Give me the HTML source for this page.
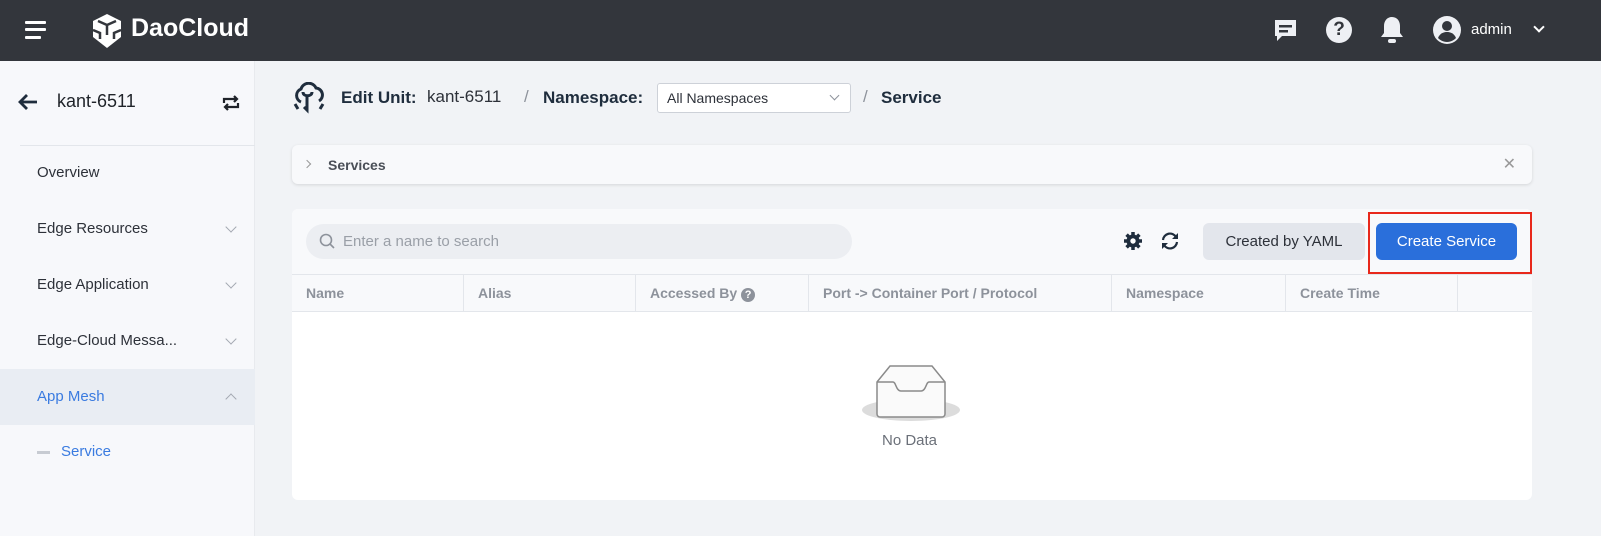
<!DOCTYPE html>
<html><head><meta charset="utf-8"><style>
*{box-sizing:border-box;margin:0;padding:0}
body{width:1601px;height:536px;overflow:hidden;font-family:"Liberation Sans",sans-serif;background:#f1f3f6;position:relative;color:#1f2329}
.hdr{position:absolute;left:0;top:0;width:1601px;height:61px;background:#33363c}
.side{position:absolute;left:0;top:61px;width:255px;height:475px;background:#f7f8fb;border-right:1px solid #e8eaee}
.nav{position:absolute;left:0;width:255px;height:56px;font-size:15px;color:#2d3139;padding-left:37px;line-height:56px}
.chev{position:absolute;right:20px;top:22px;width:8px;height:8px;border-right:1.5px solid #a4a9b2;border-bottom:1.5px solid #a4a9b2;transform:rotate(45deg)}
.card{position:absolute;background:#fff;border-radius:6px}
.th{position:absolute;top:275px;height:36px;line-height:36px;font-size:14px;font-weight:bold;color:#8d929b;padding-left:14px;border-right:1px solid #e3e6eb}
</style></head><body>
<div class="hdr">
 <div style="position:absolute;left:25px;top:21px;width:21px;height:3px;background:#fff;border-radius:1px"></div>
 <div style="position:absolute;left:25px;top:28px;width:21px;height:3px;background:#fff;border-radius:1px"></div>
 <div style="position:absolute;left:25px;top:36px;width:16px;height:3px;background:#fff;border-radius:1px"></div>
 <svg style="position:absolute;left:90px;top:13px" width="34" height="36" viewBox="0 0 34 36"><path d="M17 1 L31 8 L31 24 L17 35 L3 24 L3 8Z" fill="#fff"/><path d="M17 12 L8 8 M17 12 L26 8 M17 12 L17 22 M3 17 L10 20 L10 26 M31 17 L24 20 L24 26" stroke="#33363c" stroke-width="2.5" fill="none"/></svg>
 <div style="position:absolute;left:131px;top:14px;font-size:25px;font-weight:bold;color:#fff">DaoCloud</div>
 <svg style="position:absolute;left:1272px;top:17px" width="27" height="28" viewBox="0 0 27 28"><path d="M3 3h21v16H10l-5 5v-5H3z" fill="#eef0f4"/><rect x="7" y="8" width="13" height="2.5" fill="#33363c"/><rect x="7" y="13" width="9" height="2.5" fill="#33363c"/></svg>
 <div style="position:absolute;left:1326px;top:17px;width:26px;height:26px;border-radius:50%;background:#eef0f4;color:#33363c;font-weight:bold;font-size:19px;text-align:center;line-height:26px">?</div>
 <svg style="position:absolute;left:1379px;top:15px" width="26" height="30" viewBox="0 0 26 30"><path d="M13 2c-5 0-8 4-8 9v7l-3 4h22l-3-4v-7c0-5-3-9-8-9z" fill="#eef0f4"/><rect x="9" y="24" width="8" height="4" rx="2" fill="#eef0f4"/></svg>
 <svg style="position:absolute;left:1432px;top:15px" width="30" height="30" viewBox="0 0 30 30"><circle cx="15" cy="15" r="14" fill="#eef0f4"/><circle cx="15" cy="11" r="5" fill="#33363c"/><path d="M6 23c2-5 6-6 9-6s7 1 9 6c-2 2-5 4-9 4s-7-2-9-4z" fill="#33363c"/></svg>
 <div style="position:absolute;left:1471px;top:21px;font-size:15px;color:#fff">admin</div>
 <div style="position:absolute;left:1535px;top:23px;width:8px;height:8px;border-right:2px solid #fff;border-bottom:2px solid #fff;transform:rotate(45deg)"></div>
</div>
<div class="side">
 <svg style="position:absolute;left:17px;top:32px" width="22" height="18" viewBox="0 0 22 18"><path d="M20 9H3M10 2L3 9l7 7" stroke="#1f2d3d" stroke-width="2.8" fill="none"/></svg>
 <div style="position:absolute;left:57px;top:30px;font-size:18px;color:#1f2329">kant-6511</div>
 <svg style="position:absolute;left:221px;top:33px" width="20" height="18" viewBox="0 0 20 18"><path d="M3 9V5h13M13 2l3 3-3 3M17 9v4H4M7 16l-3-3 3-3" stroke="#1f2329" stroke-width="2.2" fill="none"/></svg>
 <div style="position:absolute;left:20px;top:84px;width:235px;border-top:1px solid #e3e6eb"></div>
 <div class="nav" style="top:84px">Overview</div>
 <div class="nav" style="top:140px">Edge Resources<div class="chev"></div></div>
 <div class="nav" style="top:196px">Edge Application<div class="chev"></div></div>
 <div class="nav" style="top:252px">Edge-Cloud Messa...<div class="chev"></div></div>
 <div class="nav" style="top:308px;background:#e9edf3;color:#3a7be0">App Mesh<div class="chev" style="transform:rotate(225deg);top:26px"></div></div>
 <div style="position:absolute;left:37px;top:390px;width:13px;height:3px;background:#c7cbd2"></div>
 <div style="position:absolute;left:61px;top:382px;font-size:15px;color:#3a7be0">Service</div>
</div>
<svg style="position:absolute;left:292px;top:82px" width="34" height="32" viewBox="0 0 34 32"><path d="M9 20a7 7 0 0 1 0-13a8 8 0 0 1 15-1a7 7 0 0 1 3 13M11 10c0 5 9 5 9 0M15 14v14l-3-3M3 22l3 5M31 22l-3 5" stroke="#1f2d3d" stroke-width="3" fill="none"/></svg>
<div style="position:absolute;left:341px;top:88px;font-size:17px;font-weight:bold;color:#1f2d3d">Edit Unit:</div>
<div style="position:absolute;left:427px;top:87px;font-size:17px;color:#2d3139">kant-6511</div>
<div style="position:absolute;left:524px;top:87px;font-size:17px;color:#8d929b">/</div>
<div style="position:absolute;left:543px;top:88px;font-size:17px;font-weight:bold;color:#1f2d3d">Namespace:</div>
<div style="position:absolute;left:657px;top:83px;width:194px;height:30px;background:#fff;border:1px solid #cdd1d8;border-radius:3px;font-size:14px;line-height:28px;padding-left:9px;color:#2d3139">All Namespaces<div style="position:absolute;right:12px;top:8px;width:7px;height:7px;border-right:1.3px solid #8d929b;border-bottom:1.3px solid #8d929b;transform:rotate(45deg)"></div></div>
<div style="position:absolute;left:863px;top:87px;font-size:17px;color:#8d929b">/</div>
<div style="position:absolute;left:881px;top:88px;font-size:17px;font-weight:bold;color:#1f2d3d">Service</div>
<div class="card" style="left:292px;top:145px;width:1240px;height:39px;background:#f8f9fb;box-shadow:0 1px 3px rgba(0,0,0,.12)">
 <div style="position:absolute;left:12px;top:16px;width:6px;height:6px;border-right:1.3px solid #999;border-top:1.3px solid #999;transform:rotate(45deg)"></div>
 <div style="position:absolute;left:36px;top:12px;font-size:14px;font-weight:bold;color:#4a4f57">Services</div>
 <div style="position:absolute;right:16px;top:9px;font-size:16px;color:#999">✕</div>
</div>
<div class="card" style="left:292px;top:209px;width:1240px;height:291px;background:#fff"></div>
<div style="position:absolute;left:292px;top:209px;width:1240px;height:66px;background:#f8f9fb;border-radius:6px 6px 0 0"></div>
<div style="position:absolute;left:306px;top:224px;width:546px;height:35px;border-radius:18px;background:#eceef2"></div>
<svg style="position:absolute;left:319px;top:233px" width="17" height="17" viewBox="0 0 17 17"><circle cx="7" cy="7" r="5.5" stroke="#8d929b" stroke-width="1.6" fill="none"/><path d="M11 11l4 4" stroke="#8d929b" stroke-width="1.6"/></svg>
<div style="position:absolute;left:343px;top:233px;font-size:15px;color:#9a9fa7">Enter a name to search</div>
<svg style="position:absolute;left:1123px;top:231px" width="20" height="20" viewBox="0 0 20 20"><circle cx="10" cy="10" r="6.5" fill="#1f2d3d"/><g stroke="#1f2d3d" stroke-width="3.5"><path d="M10 1v18M1 10h18M3.6 3.6l12.8 12.8M16.4 3.6L3.6 16.4"/></g><circle cx="10" cy="10" r="2.7" fill="#fff"/></svg>
<svg style="position:absolute;left:1159px;top:231px" width="22" height="20" viewBox="0 0 22 20"><path d="M4 9a7 7 0 0 1 13-3M18 11a7 7 0 0 1-13 3" stroke="#1f2d3d" stroke-width="2.2" fill="none"/><path d="M19 2v6h-6zM3 18v-6h6z" fill="#1f2d3d"/></svg>
<div style="position:absolute;left:1203px;top:223px;width:162px;height:37px;background:#e3e6ec;border-radius:6px;font-size:15px;color:#2d3139;text-align:center;line-height:37px">Created by YAML</div>
<div style="position:absolute;left:1368px;top:212px;width:164px;height:62px;border:2px solid #e8281b"></div>
<div style="position:absolute;left:1376px;top:223px;width:141px;height:37px;background:#2a6fdb;border-radius:6px;font-size:15px;color:#fff;text-align:center;line-height:37px">Create Service</div>
<div style="position:absolute;left:292px;top:274px;width:1240px;height:38px;background:#f8f9fb;border-top:1px solid #e3e6eb;border-bottom:1px solid #e3e6eb"></div>
<div class="th" style="left:292px;width:172px">Name</div>
<div class="th" style="left:464px;width:172px">Alias</div>
<div class="th" style="left:636px;width:173px">Accessed By <span style="display:inline-block;width:14px;height:14px;border-radius:50%;background:#8d929b;color:#fff;font-size:11px;line-height:14px;text-align:center">?</span></div>
<div class="th" style="left:809px;width:303px">Port -&gt; Container Port / Protocol</div>
<div class="th" style="left:1112px;width:174px">Namespace</div>
<div class="th" style="left:1286px;width:172px">Create Time</div>
<svg style="position:absolute;left:860px;top:362px" width="102" height="60" viewBox="0 0 102 60"><ellipse cx="51" cy="48" rx="49" ry="11" fill="#dcdcdc"/><path d="M17 20L30 4h42l13 16v32a3 3 0 0 1-3 3H20a3 3 0 0 1-3-3z" fill="#fafafa" stroke="#8a8a8a" stroke-width="1.5"/><path d="M17 20h16c3 0 3 9 8 9h20c5 0 5-9 8-9h16" fill="none" stroke="#8a8a8a" stroke-width="1.5"/></svg>
<div style="position:absolute;left:882px;top:432px;font-size:15px;color:#6b7079">No Data</div>
</body></html>
